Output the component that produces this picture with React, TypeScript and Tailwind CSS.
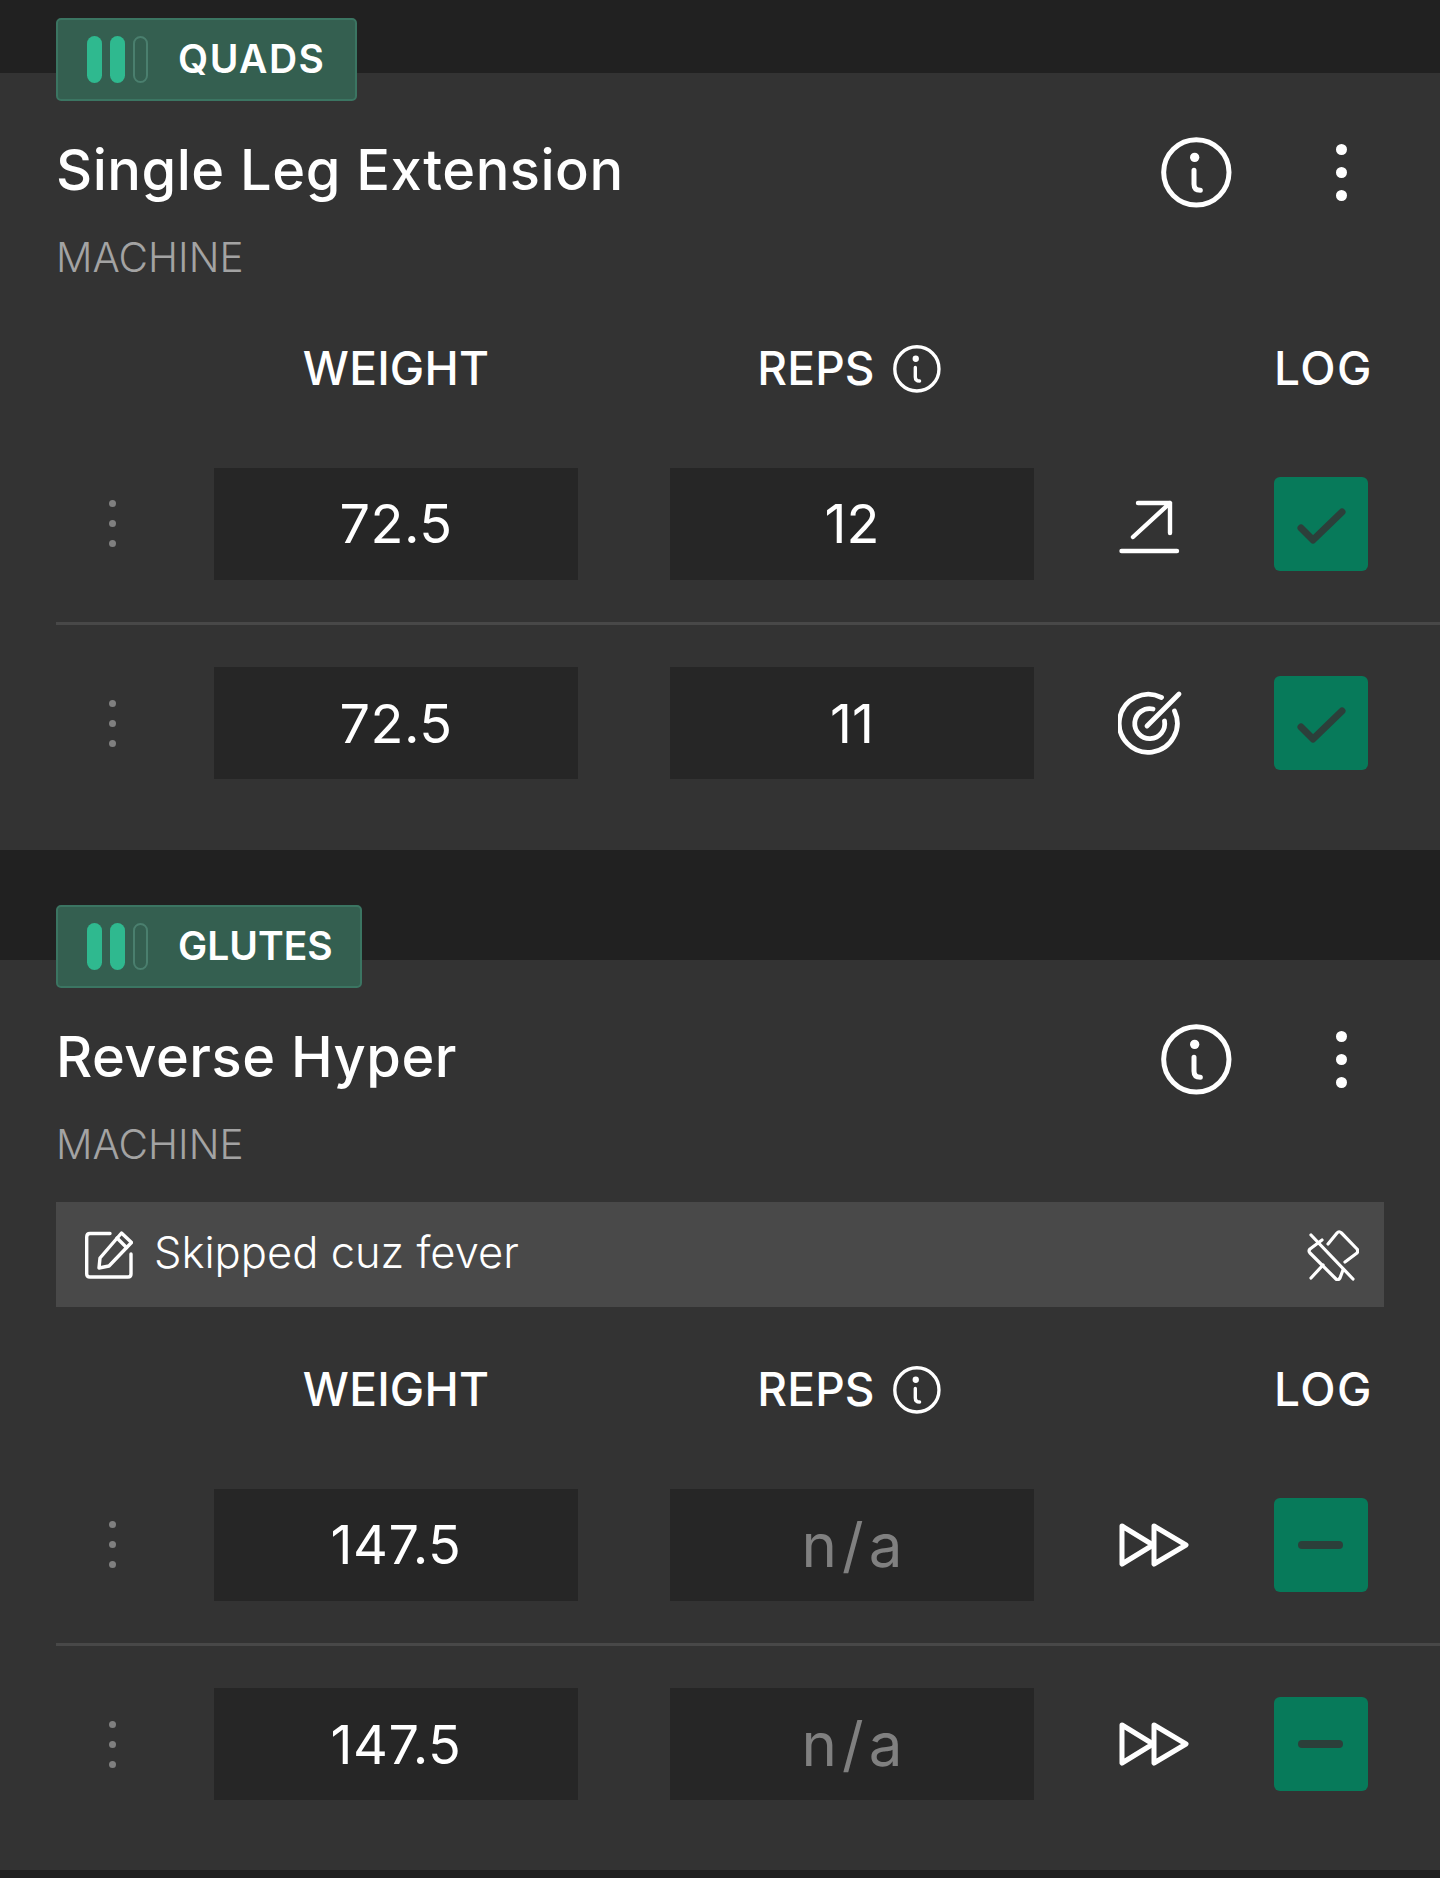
import React from "react";

function InfoIcon({ className }: { className: string }) {
  return (
    <svg viewBox="0 0 213 213" className={className} fill="none" stroke="currentColor" strokeWidth="15" strokeLinecap="round">
      <circle cx="106" cy="106" r="98" />
      <circle cx="101" cy="61" r="14" fill="currentColor" stroke="none" />
      <path d="M99 100 V142 Q99 160 118 160" />
    </svg>
  );
}

function MoreDots() {
  return (
    <div className="flex flex-col items-center gap-[12px] w-[12px]">
      <span className="block w-[11px] h-[11px] rounded-full bg-white" />
      <span className="block w-[11px] h-[11px] rounded-full bg-white" />
      <span className="block w-[11px] h-[11px] rounded-full bg-white" />
    </div>
  );
}

function Handle() {
  return (
    <div className="w-[158px] shrink-0 flex justify-center pr-[46px] pl-0">
      <div className="flex flex-col items-center gap-[13px]">
        <span className="block w-[7px] h-[7px] rounded-full bg-[#808080]" />
        <span className="block w-[7px] h-[7px] rounded-full bg-[#808080]" />
        <span className="block w-[7px] h-[7px] rounded-full bg-[#808080]" />
      </div>
    </div>
  );
}

function ArrowUp() {
  return (
    <svg viewBox="0 0 66 60" className="w-[66px] h-[60px]" fill="none" stroke="white" strokeWidth="4.4" strokeLinecap="round" strokeLinejoin="round">
      <path d="M15 43 L52 9 M20 9 H52 V39" />
      <path d="M3.500 57 H59" />
    </svg>
  );
}

function Target() {
  return (
    <svg viewBox="0 0 66 66" className="w-[66px] h-[66px]" fill="none" stroke="white" strokeWidth="4.8" strokeLinecap="round" strokeLinejoin="round">
      <path d="M56.5 21 A29 29 0 1 1 43.5 7.5" />
      <path d="M46.5 31 A15 15 0 1 1 35 19" />
      <path d="M29 36 L61 4" />
    </svg>
  );
}

function FastForward() {
  return (
    <svg viewBox="0 0 72 48" className="w-[72px] h-[48px]" fill="none" stroke="white" strokeWidth="5" strokeLinecap="round" strokeLinejoin="round">
      <path d="M4 5 L35 24 L4 43 Z" />
      <path d="M36 5 L68 24 L36 43 Z" />
    </svg>
  );
}

function Check() {
  return (
    <svg viewBox="0 0 94 94" className="w-[94px] h-[94px]" fill="none" stroke="#2c3f3a" strokeWidth="7" strokeLinecap="round" strokeLinejoin="round">
      <path d="M27 51 L39 63 L68 35" />
    </svg>
  );
}

function Minus() {
  return (
    <svg viewBox="0 0 94 94" className="w-[94px] h-[94px]" fill="none" stroke="#2c3f3a" strokeWidth="8" strokeLinecap="round">
      <path d="M28 47 H65" />
    </svg>
  );
}

function PenSquare() {
  return (
    <svg viewBox="0 0 48 48" className="w-[48px] h-[48px]" fill="none" stroke="white" strokeWidth="3.4" strokeLinecap="round" strokeLinejoin="round">
      <path d="M25 2.5 H5 Q1.7 2.5 1.7 6 V43 Q1.7 46 5 46 H43 Q46 46 46 43 V23" />
      <path d="M36.5 2 L46.5 11.5 L24 35 L14 37 L15 27 Z" />
      <path d="M32 7 L41.5 16.5" />
    </svg>
  );
}

function PinOff() {
  return (
    <svg viewBox="0 0 52 52" className="w-[52px] h-[52px]" fill="none" stroke="white" strokeWidth="3.2" strokeLinecap="round" strokeLinejoin="round">
      <path d="M4 6 L46 50" />
      <path d="M21 15 L30 4 Q32 1.500 34.500 4 L50 20 Q51.500 22 50 24 L38 33" />
      <path d="M15 11 L3 20 Q1 22 3 24 L29 50 Q31 52 33 49 L36 41" />
      <path d="M16 36 L4 49" />
    </svg>
  );
}

function Badge({ label, width, track }: { label: string; width: string; track: string }) {
  return (
    <div className={`flex items-center h-[83px] -mt-[55px] rounded-[5px] border-2 border-[#3b7562] bg-[#345f50] pl-[29px] ${width}`}>
      <span className="block w-[15px] h-[47px] rounded-full bg-[#2fb98f]" />
      <span className="block w-[15px] h-[47px] rounded-full bg-[#2fb98f] ml-[8px]" />
      <span className="block w-[15px] h-[47px] rounded-full border-2 border-[#4a7f6e] ml-[8px]" />
      <span className={`ml-[30px] mb-[3px] text-[39px] leading-none font-semibold text-white ${track}`}>{label}</span>
    </div>
  );
}

function Row({ weight, reps, icon, done, divider }: { weight: string; reps: string; icon: React.ReactNode; done: boolean; divider: boolean }) {
  const na = reps === "n/a";
  return (
    <div className={`flex items-center ml-[56px] ${divider ? "h-[200px] border-b-[3px] border-[#484848]" : "h-[196px]"}`}>
      <Handle />
      <div className="w-[364px] h-[112px] bg-[#262626] flex items-center justify-center text-[54px] font-normal text-white tracking-[0.5px]">{weight}</div>
      <div className={`w-[364px] h-[112px] ml-[92px] bg-[#262626] flex items-center justify-center font-normal ${na ? "text-[60px] tracking-[5px] pl-[5px] text-[#808080]" : "text-[54px] text-white"}`}>{reps}</div>
      <div className="w-[240px] pl-[84px] flex items-center">{icon}</div>
      <div className="w-[94px] h-[94px] rounded-[6px] bg-[#077a5a]">{done ? <Check /> : <Minus />}</div>
    </div>
  );
}

function Header() {
  return (
    <div className="relative flex items-center h-[60px] pb-[2px] ml-[214px] text-[46px] font-medium text-white tracking-[0.2px]">
      <div className="w-[364px] text-center">WEIGHT</div>
      <div className="w-[364px] ml-[92px] flex items-center justify-center gap-[18px] pr-[6px]">
        <span>REPS</span>
        <InfoIcon className="w-[48px] h-[48px] mt-[2px]" />
      </div>
      <div className="ml-[240px] w-[94px] text-center whitespace-nowrap tracking-[1.5px]">LOG</div>
    </div>
  );
}

function Card({ label, badgeW, track, title, note, rows, top, bottom }: { label: string; badgeW: string; track: string; title: string; note?: string; rows: { weight: string; reps: string; icon: React.ReactNode; done: boolean }[]; top: string; bottom: string }) {
  return (
    <section className={`bg-[#333333] ${top} ${bottom}`}>
      <div className="pl-[56px] flex">
        <Badge label={label} width={badgeW} track={track} />
      </div>
      <div className="flex items-center h-[71px] mt-[36px] pl-[56px]">
        <h2 className="text-[56px] mb-[5px] leading-none font-medium text-white flex-1 tracking-[0.5px]">{title}</h2>
        <InfoIcon className="w-[71px] h-[71px] text-white" />
        <div className="ml-[103px] mr-[93px]"><MoreDots /></div>
      </div>
      <div className="pl-[56px] mt-[30px] h-[39px] leading-[40px] text-[40.5px] font-light text-[#a3a3a3]">MACHINE</div>
      {note ? (
        <div className="ml-[56px] mr-[56px] mt-[38px] h-[105px] bg-[#494949] flex items-center pl-[29px] pr-[25px]">
          <PenSquare />
          <span className="ml-[21px] mb-[4px] flex-1 text-[43.5px] font-light text-white">{note}</span>
          <PinOff />
        </div>
      ) : null}
      <div className={note ? "mt-[53px]" : "mt-[62px]"}>
        <Header />
      </div>
      <div className="mt-[26px]">
        {rows.map((r, i) => (
          <Row key={i} {...r} divider={i < rows.length - 1} />
        ))}
      </div>
    </section>
  );
}

export default function App() {
  return (
    <div className="w-[1440px] h-[1878px] overflow-hidden bg-[#212121] [font-family:Inter,sans-serif]">
      <Card
        top="mt-[73px]"
        bottom="pb-[29px]"
        label="QUADS"
        badgeW="w-[301px]"
        track="tracking-[1.5px]"
        title="Single Leg Extension"
        rows={[
          { weight: "72.5", reps: "12", icon: <ArrowUp />, done: true },
          { weight: "72.5", reps: "11", icon: <Target />, done: true },
        ]}
      />
      <Card
        top="mt-[110px]"
        bottom="pb-[28px]"
        label="GLUTES"
        badgeW="w-[306px]"
        track="tracking-[0px]"
        title="Reverse Hyper"
        note="Skipped cuz fever"
        rows={[
          { weight: "147.5", reps: "n/a", icon: <FastForward />, done: false },
          { weight: "147.5", reps: "n/a", icon: <FastForward />, done: false },
        ]}
      />
    </div>
  );
}
